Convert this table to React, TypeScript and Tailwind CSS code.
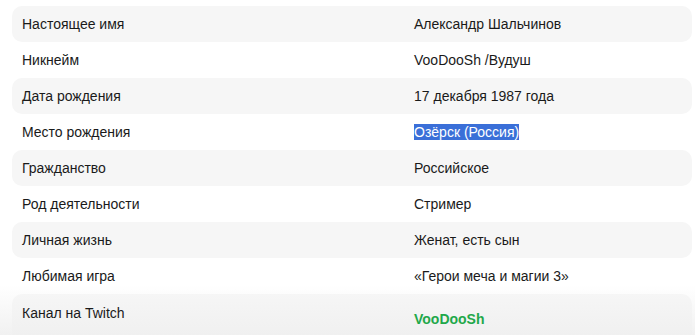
const rows: { label: string; value: React.ReactNode }[] = [
  { label: 'Настоящее имя', value: 'Александр Шальчинов' },
  { label: 'Никнейм', value: 'VooDooSh /Вудуш' },
  { label: 'Дата рождения', value: '17 декабря 1987 года' },
  {
    label: 'Место рождения',
    value: <span className="bg-[#3a6fd8] text-white">Озёрск (Россия)</span>,
  },
  { label: 'Гражданство', value: 'Российское' },
  { label: 'Род деятельности', value: 'Стример' },
  { label: 'Личная жизнь', value: 'Женат, есть сын' },
  { label: 'Любимая игра', value: '«Герои меча и магии 3»' },
];

export default function App() {
  return (
    <div
      className="w-[695px] h-[335px] overflow-hidden bg-gradient-to-b from-white from-[85%] to-[#f1f1f1] pt-[6px] px-[12px] text-[14px] text-[#1a1a1a]"
      style={{ fontFamily: '"Liberation Sans", Arial, sans-serif' }}
    >
      <div className="flex flex-col w-[680px]">
        {rows.map((row, i) => (
          <div
            key={row.label}
            className={`flex items-center h-[36px] rounded-[10px] ${i % 2 === 0 ? 'bg-[#f6f6f6]' : ''}`}
          >
            <div className="w-[402px] pl-[10px]">{row.label}</div>
            <div className="flex-1">{row.value}</div>
          </div>
        ))}
        <div className="flex h-[48px] rounded-[10px] bg-gradient-to-b from-[#f6f6f6] to-[#efefef]">
          <div className="w-[402px] pl-[10px] pt-[9px]">Канал на Twitch</div>
          <div className="flex-1 pt-[15px] font-bold text-[#1fa84a]">VooDooSh</div>
        </div>
      </div>
    </div>
  );
}
